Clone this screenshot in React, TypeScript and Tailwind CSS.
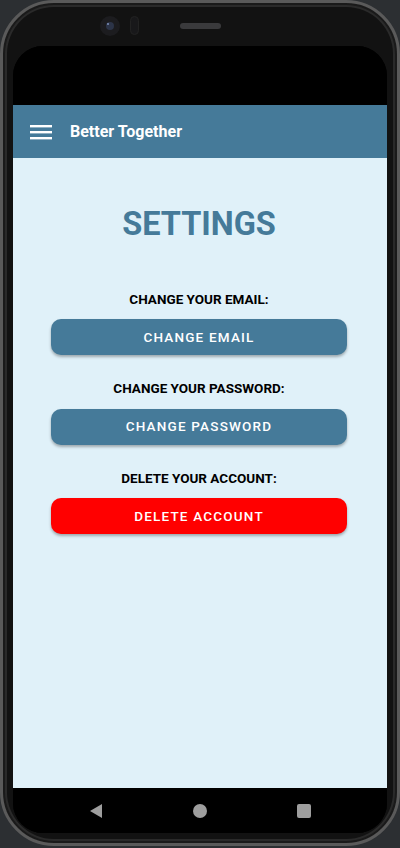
const sections = [
  { label: "CHANGE YOUR EMAIL:", action: "CHANGE EMAIL", danger: false },
  { label: "CHANGE YOUR PASSWORD:", action: "CHANGE PASSWORD", danger: false },
  { label: "DELETE YOUR ACCOUNT:", action: "DELETE ACCOUNT", danger: true },
];

const Menu = () => (
  <svg width="22" height="16" viewBox="0 0 22 16">
    <rect x="0" y="1" width="22" height="2.4" fill="white" />
    <rect x="0" y="7" width="22" height="2.4" fill="white" />
    <rect x="0" y="13" width="22" height="2.4" fill="white" />
  </svg>
);

const App: React.FC = () => {
  return (
    <div
      className="w-[400px] h-[848px] bg-[#2c2f32] overflow-hidden"
      style={{ fontFamily: "Roboto, 'Liberation Sans', sans-serif" }}
    >
      <div className="h-[846px] rounded-[54px] bg-[#121212] border-[3px] border-[#5a5a5a] shadow-[inset_0_0_0_2px_#1a1a1a,inset_0_0_0_4px_#2a2a2a] flex flex-col px-[10px] pb-[10px]">
        {/* top bezel */}
        <div className="h-[43px] shrink-0 flex items-center pl-[87px] pt-[2px]">
          <div className="w-[20px] h-[20px] rounded-full bg-[#1c1c1f] flex items-center justify-center">
            <div className="w-[8px] h-[8px] rounded-full bg-[#2c3448] flex items-start justify-start p-[1px]">
              <div className="w-[2px] h-[2px] rounded-full bg-[#7d8fb8]" />
            </div>
          </div>
          <div className="ml-[10px] w-[9px] h-[19px] rounded-full bg-[#18181a] border border-[#222]" />
          <div className="ml-[41px] w-[41px] h-[6px] rounded-full bg-[#3a3a3c]" />
        </div>

        {/* screen */}
        <div className="flex-1 rounded-[30px] overflow-hidden bg-black flex flex-col">
          <div className="h-[59px] shrink-0 bg-black" />
          <div className="h-[53px] shrink-0 bg-[#457a99] flex items-center pl-[17px] gap-[18px]">
            <Menu />
            <span className="text-white font-bold text-[16px]">Better Together</span>
          </div>
          <div className="flex-1 bg-[#e0f1f9] flex flex-col items-center pl-[38px] pr-[40px] pt-[50px]">
            <h1 className="text-[#457a99] font-bold text-[32.5px] leading-none mb-[52px]">SETTINGS</h1>
            {sections.map((s) => (
              <div key={s.action} className="w-full flex flex-col items-center mb-[27px]">
                <p className="text-black font-bold text-[13.5px] leading-none mb-[13px]">{s.label}</p>
                <button
                  className={`w-full h-[36px] rounded-[10px] text-white font-medium text-[13.5px] tracking-[1.2px] shadow-[0_2px_3px_rgba(0,0,0,0.3)] ${
                    s.danger ? "bg-[#ff0000]" : "bg-[#457a99]"
                  }`}
                >
                  {s.action}
                </button>
              </div>
            ))}
          </div>
          <div className="h-[45px] shrink-0 bg-black flex items-center pl-[76px] gap-[90px]">
            <svg width="14" height="16" viewBox="0 0 14 16">
              <path d="M13 1 L1 8 L13 15 Z" fill="#9e9e9e" />
            </svg>
            <div className="w-[14px] h-[14px] rounded-full bg-[#9e9e9e]" />
            <div className="w-[14px] h-[14px] rounded-[2px] bg-[#9e9e9e]" />
          </div>
        </div>
      </div>
    </div>
  );
};

export default App;
